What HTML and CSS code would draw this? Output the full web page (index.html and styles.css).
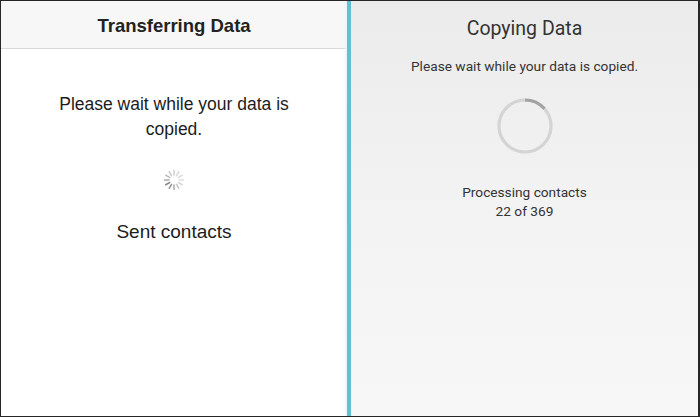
FILE: index.html
```html
<!DOCTYPE html>
<html>
<head>
<meta charset="utf-8">
<link rel="stylesheet" href="styles.css">
</head>
<body>
<div class="frame">
  <section class="ios">
    <header class="ios-bar">Transferring Data</header>
    <div class="ios-body">
      <p class="ios-msg">Please wait while your data is<br>copied.</p>
      <svg class="ios-spinner" width="22" height="22" viewBox="-11 -11 22 22">
        <g stroke-linecap="round" stroke-width="1.6">
          <line x1="0" y1="-5" x2="0" y2="-9.5" stroke="#d2d2d2" transform="rotate(0)"/>
          <line x1="0" y1="-5" x2="0" y2="-9.5" stroke="#dadada" transform="rotate(30)"/>
          <line x1="0" y1="-5" x2="0" y2="-9.5" stroke="#dedede" transform="rotate(60)"/>
          <line x1="0" y1="-5" x2="0" y2="-9.5" stroke="#e0e0e0" transform="rotate(90)"/>
          <line x1="0" y1="-5" x2="0" y2="-9.5" stroke="#d8d8d8" transform="rotate(120)"/>
          <line x1="0" y1="-5" x2="0" y2="-9.5" stroke="#c8c8c8" transform="rotate(150)"/>
          <line x1="0" y1="-5" x2="0" y2="-9.5" stroke="#b0b0b0" transform="rotate(180)"/>
          <line x1="0" y1="-5" x2="0" y2="-9.5" stroke="#9a9a9a" transform="rotate(210)"/>
          <line x1="0" y1="-5" x2="0" y2="-9.5" stroke="#8a8a8a" transform="rotate(240)"/>
          <line x1="0" y1="-5" x2="0" y2="-9.5" stroke="#a8a8a8" transform="rotate(270)"/>
          <line x1="0" y1="-5" x2="0" y2="-9.5" stroke="#c0c0c0" transform="rotate(300)"/>
          <line x1="0" y1="-5" x2="0" y2="-9.5" stroke="#cccccc" transform="rotate(330)"/>
        </g>
      </svg>
      <p class="ios-status">Sent contacts</p>
    </div>
  </section>
  <div class="divider"></div>
  <section class="android">
    <h1 class="and-title">Copying Data</h1>
    <p class="and-msg">Please wait while your data is copied.</p>
    <svg class="and-ring" width="60" height="60" viewBox="0 0 60 60">
      <circle cx="30" cy="30" r="26" fill="none" stroke="#d4d4d4" stroke-width="3.2"/>
      <path d="M 30 4 A 26 26 0 0 1 49.5 12.8" fill="none" stroke="#a3a3a3" stroke-width="3.2"/>
    </svg>
    <p class="and-status">Processing contacts<br>22 of 369</p>
  </section>
</div>
</body>
</html>
```

FILE: styles.css
```css
html, body {
  margin: 0;
  padding: 0;
  background: #ffffff;
}

.frame {
  box-sizing: border-box;
  width: 700px;
  height: 417px;
  border: 1px solid #262626;
  border-right-width: 2px;
  display: flex;
  overflow: hidden;
}

.ios {
  width: 346px;
  background: #ffffff;
  display: flex;
  flex-direction: column;
  font-family: "Liberation Sans", Arial, sans-serif;
  color: #1c1c1c;
}

.ios-bar {
  height: 48px;
  padding-top: 3px;
  box-sizing: border-box;
  background: #f7f7f7;
  border-bottom: 1px solid #d9d9d9;
  display: flex;
  align-items: center;
  justify-content: center;
  font-size: 18.5px;
  font-weight: bold;
  color: #222;
}

.ios-body {
  display: flex;
  flex-direction: column;
  align-items: center;
}

.ios-msg {
  margin: 43px 0 0;
  font-size: 17.5px;
  line-height: 25px;
  text-align: center;
}

.ios-spinner {
  margin-top: 27px;
}

.ios-status {
  margin: 30px 0 0;
  font-size: 19px;
  line-height: 22px;
}

.divider {
  width: 4px;
  background: #5fc2d4;
  box-shadow: -2px 0 2px #e6f7fa, 2px 0 2px #e6f7fa;
}

.android {
  flex: 1;
  background: linear-gradient(#ebebeb, #f2f2f2 45%, #f7f7f7);
  display: flex;
  flex-direction: column;
  align-items: center;
  font-family: Roboto, "Liberation Sans", sans-serif;
  color: #333333;
}

.and-title {
  margin: 16px 0 0;
  font-size: 19.5px;
  font-weight: normal;
  line-height: 24px;
}

.and-msg {
  margin: 16px 0 0;
  font-size: 13.7px;
  line-height: 18px;
}

.and-ring {
  margin-top: 21px;
}

.and-status {
  margin: 27px 0 0;
  font-size: 13.7px;
  line-height: 19px;
  text-align: center;
}
```
